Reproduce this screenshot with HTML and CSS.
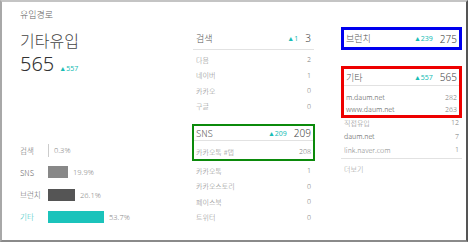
FILE: index.html
```html
<!DOCTYPE html>
<html lang="ko">
<head>
<meta charset="utf-8">
<link rel="stylesheet" href="styles.css">
</head>
<body>
<div class="card">
  <section class="left">
    <div class="title">유입경로</div>
    <div class="name">기타유입</div>
    <div class="total"><span class="big">565</span><span class="up">▲557</span></div>
    <div class="bars">
      <div class="bar-row"><span class="blabel">검색</span><span class="bar thin"></span><span class="pct">0.3%</span></div>
      <div class="bar-row"><span class="blabel">SNS</span><span class="bar sns" style="width:20px"></span><span class="pct">19.9%</span></div>
      <div class="bar-row"><span class="blabel">브런치</span><span class="bar brunch" style="width:27px"></span><span class="pct">26.1%</span></div>
      <div class="bar-row active"><span class="blabel">기타</span><span class="bar etc" style="width:56px"></span><span class="pct">53.7%</span></div>
    </div>
  </section>
  <section class="col mid">
    <div class="group">
      <div class="head"><span class="hname">검색</span><span class="up">▲1</span><span class="hnum">3</span></div>
      <div class="rows">
        <div class="row"><span>다음</span><span>2</span></div>
        <div class="row"><span>네이버</span><span>1</span></div>
        <div class="row"><span>카카오</span><span>0</span></div>
        <div class="row"><span>구글</span><span>0</span></div>
      </div>
    </div>
    <div class="boxed green">
      <div class="head"><span class="hname">SNS</span><span class="up">▲209</span><span class="hnum">209</span></div>
      <div class="row"><span>카카오톡 #탭</span><span>208</span></div>
    </div>
    <div class="rows after-sns">
      <div class="row"><span>카카오톡</span><span>1</span></div>
      <div class="row"><span>카카오스토리</span><span>0</span></div>
      <div class="row"><span>페이스북</span><span>0</span></div>
      <div class="row"><span>트위터</span><span>0</span></div>
    </div>
  </section>
  <section class="col right">
    <div class="boxed blue">
      <div class="head"><span class="hname">브런치</span><span class="up">▲239</span><span class="hnum">275</span></div>
    </div>
    <div class="boxed red">
      <div class="head"><span class="hname">기타</span><span class="up">▲557</span><span class="hnum">565</span></div>
      <div class="rows">
        <div class="row dark"><span>m.daum.net</span><span>282</span></div>
        <div class="row dark"><span>www.daum.net</span><span>263</span></div>
      </div>
    </div>
    <div class="rows after-etc">
      <div class="row"><span>직접유입</span><span>12</span></div>
      <div class="row dark"><span>daum.net</span><span>7</span></div>
      <div class="row"><span>link.naver.com</span><span>1</span></div>
    </div>
    <div class="more">더보기</div>
  </section>
</div>
</body>
</html>
```
FILE: styles.css
```css
* { box-sizing: border-box; }
html, body { margin: 0; padding: 0; background: #fff; }
body {
  width: 470px; height: 245px; overflow: hidden;
  font-family: "Noto Sans CJK KR", "Noto Sans", sans-serif;
  font-weight: 300;
  color: #333;
}
.card {
  width: 468px; height: 242px;
  border-top: 2px solid #c4c4c4;
  border-left: 2px solid #a8a8a8;
  border-right: 2px solid #555;
  border-bottom: 2px solid #8a8a8a;
  display: flex;
  align-items: flex-start;
}
/* left column */
.left { width: 191px; padding: 6px 0 0 18px; display: flex; flex-direction: column; }
.title { font-size: 9px; color: #666; line-height: 14px; height: 14px; }
.name { font-size: 16px; color: #444; line-height: 18px; height: 18px; margin-top: 9px; }
.total { display: flex; align-items: baseline; height: 22px; margin-top: 4px; }
.big { font-family: "Noto Sans", sans-serif; font-weight: 300; font-size: 20px; line-height: 22px; color: #333; }
.up { color: #18bdb5; font-size: 7px; font-family: "Noto Sans", sans-serif; font-weight: 400; }
.total .up { margin-left: 5px; }
.bars { margin-top: 68.75px; display: flex; flex-direction: column; }
.bar-row { display: flex; align-items: center; height: 12.5px; margin-bottom: 9.8px; font-size: 7.5px; color: #666; }
.blabel { width: 28px; }
.bar { height: 12px; display: inline-block; }
.bar.thin { width: 1px; background: #ccc; height: 13px; }
.bar.sns { background: #888; }
.bar.brunch { background: #555; }
.bar.etc { background: #1bc3bb; }
.pct { margin-left: 5px; color: #888; font-family: "Noto Sans", sans-serif; font-size: 7.5px; }
.active .blabel { color: #1bc3bb; }
/* lists */
.col { width: 121px; display: flex; flex-direction: column; }
.mid { margin-top: 25px; }
.right { margin-left: 27px; margin-top: 25px; }
.head { display: flex; align-items: center; height: 23px; border-bottom: 1px solid #e2e2e2; padding: 0 3px; }
.hname { flex: 1; font-size: 9px; color: #555; }
.head .up { margin-right: 7px; }
.hnum { font-family: "Noto Sans", sans-serif; font-size: 10px; color: #444; font-weight: 300; }
.rows { display: flex; flex-direction: column; padding-top: 2px; }
.row { display: flex; justify-content: space-between; height: 15.5px; align-items: center; font-size: 7px; color: #888; padding: 0 3px; }
.row.dark { color: #555; }
.row span:last-child { color: #777; font-family: "Noto Sans", sans-serif; }
.boxed { border-style: solid; }
.boxed.green { border-width: 2px; border-color: #0b8a0b; margin: 10px -1px 0; }
.boxed.green .head { height: 15px; padding: 0 2px; }
.boxed.green .row { height: 18px; padding: 3px 2px 0; }
.after-sns { padding-top: 2px; }
.boxed.blue { border-width: 3px; border-color: #0000ee; }
.boxed.blue .head { height: 17px; border-bottom: none; padding: 0 2px; }
.boxed.red { border-width: 3px; border-color: #ee0000; margin-top: 16px; }
.boxed.red .head { height: 17px; padding: 0 2px; }
.boxed.red .rows { padding-top: 5px; }
.boxed.red .row { height: 12px; padding: 0 2px; }
.after-etc { padding-top: 0; margin-top: -2px; }
.after-etc .row { height: 13.5px; }
.more { border-top: 1px solid #e2e2e2; margin-top: 1px; padding: 5px 3px; font-size: 7px; color: #999; }
```
